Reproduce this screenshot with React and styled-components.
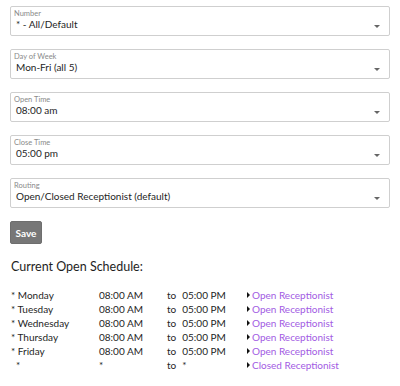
import React from 'react';
import styled, { createGlobalStyle } from 'styled-components';

const GlobalStyle = createGlobalStyle`
  body {
    margin: 0;
    background: #fff;
    font-family: Lato, "Noto Sans", sans-serif;
    color: #222;
  }
`;

const Page = styled.div`
  padding: 6px 10px 10px 10px;
`;

const Field = styled.div`
  display: flex;
  align-items: flex-start;
  height: 30px;
  box-sizing: border-box;
  border: 1px solid #cfcfcf;
  border-radius: 2px;
  margin-bottom: 13px;
  padding: 2px 9px 0 3px;
`;

const FieldBody = styled.div`
  flex: 1;
  display: flex;
  flex-direction: column;
`;

const FieldLabel = styled.span`
  font-size: 7.5px;
  line-height: 9px;
  color: #8a8a8a;
`;

const FieldValue = styled.span`
  font-size: 10px;
  line-height: 13px;
  padding-left: 2px;
  color: #1e1e1e;
`;

const Caret = styled.span`
  width: 0;
  height: 0;
  margin-top: 16px;
  border-left: 3px solid transparent;
  border-right: 3px solid transparent;
  border-top: 3.5px solid #666;
`;

const SaveButton = styled.button`
  display: block;
  background: #777;
  color: #fff;
  border: 1px solid #6e6e6e;
  border-radius: 2px;
  font-family: inherit;
  font-weight: bold;
  font-size: 10px;
  height: 23px;
  width: 32px;
  padding: 0;
  margin-top: 1px;
`;

const Heading = styled.h2`
  font-size: 12.5px;
  line-height: 16px;
  font-weight: normal;
  margin: 15px 0 13px 1px;
  color: #1e1e1e;
`;

const Schedule = styled.div`
  display: grid;
  grid-template-columns: 88px 68px 80px 1fr;
  grid-auto-rows: 14.06px;
  font-size: 10px;
  align-items: center;
  color: #1e1e1e;
`;

const Cell = styled.span`
  padding-left: ${p => (p.$indent ? '6px' : '1px')};
  white-space: nowrap;
`;

const ToText = styled.span`
  margin-right: 6px;
`;

const Route = styled.span`
  display: flex;
  align-items: center;
  color: #a25be3;
  white-space: nowrap;
`;

const Arrow = styled.span`
  width: 0;
  height: 0;
  border-top: 3px solid transparent;
  border-bottom: 3px solid transparent;
  border-left: 3.5px solid #111;
  margin: 0 2px 0 1px;
`;

const fields = [
  { label: 'Number', value: '* - All/Default' },
  { label: 'Day of Week', value: 'Mon-Fri (all 5)' },
  { label: 'Open Time', value: '08:00 am' },
  { label: 'Close Time', value: '05:00 pm' },
  { label: 'Routing', value: 'Open/Closed Receptionist (default)' },
];

const rows = [
  { day: '* Monday', open: '08:00 AM', close: '05:00 PM', route: 'Open Receptionist' },
  { day: '* Tuesday', open: '08:00 AM', close: '05:00 PM', route: 'Open Receptionist' },
  { day: '* Wednesday', open: '08:00 AM', close: '05:00 PM', route: 'Open Receptionist' },
  { day: '* Thursday', open: '08:00 AM', close: '05:00 PM', route: 'Open Receptionist' },
  { day: '* Friday', open: '08:00 AM', close: '05:00 PM', route: 'Open Receptionist' },
  { day: '*', open: '*', close: '*', route: 'Closed Receptionist', indent: true },
];

const App = () => (
  <>
    <GlobalStyle />
    <Page>
      {fields.map(f => (
        <Field key={f.label}>
          <FieldBody>
            <FieldLabel>{f.label}</FieldLabel>
            <FieldValue>{f.value}</FieldValue>
          </FieldBody>
          <Caret />
        </Field>
      ))}
      <SaveButton>Save</SaveButton>
      <Heading>Current Open Schedule:</Heading>
      <Schedule>
        {rows.map((r, i) => (
          <React.Fragment key={i}>
            <Cell $indent={r.indent}>{r.day}</Cell>
            <Cell>{r.open}</Cell>
            <Cell><ToText>to</ToText>{r.close}</Cell>
            <Route><Arrow />{r.route}</Route>
          </React.Fragment>
        ))}
      </Schedule>
    </Page>
  </>
);

export default App;
